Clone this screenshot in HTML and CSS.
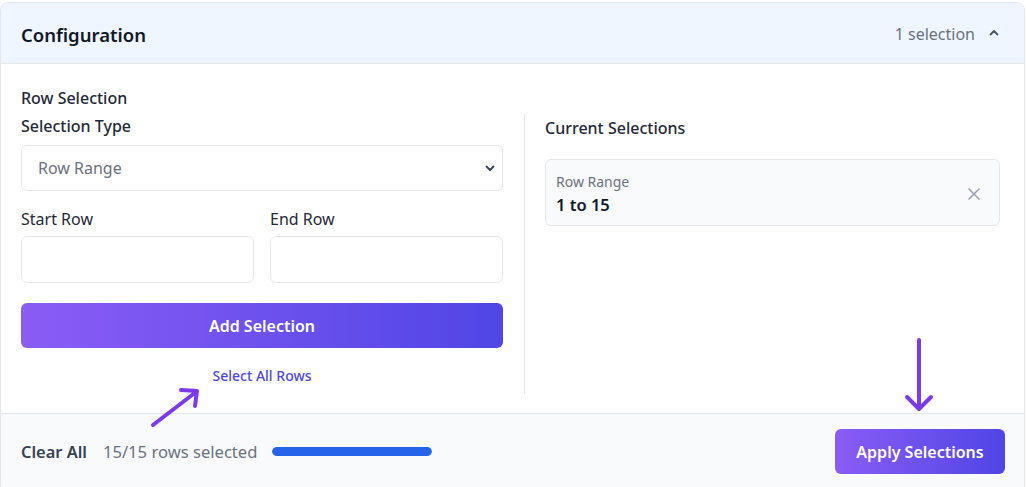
FILE: index.html
```html
<!DOCTYPE html>
<html>
<head>
<meta charset="utf-8">
<link rel="stylesheet" href="styles.css">
</head>
<body>
<div class="card">
  <div class="header">
    <div class="title">Configuration</div>
    <div class="header-right">
      <span class="count">1 selection</span>
      <svg class="chev" width="12" height="12" viewBox="0 0 12 12"><path d="M2.5 7.5 L6 4 L9.5 7.5" fill="none" stroke="#4b5563" stroke-width="1.8" stroke-linecap="round" stroke-linejoin="round"/></svg>
    </div>
  </div>
  <div class="body">
    <div class="section-title">Row Selection</div>
    <div class="grid">
      <div class="left">
        <div class="label strong">Selection Type</div>
        <div class="select">
          <span>Row Range</span>
          <svg width="12" height="12" viewBox="0 0 12 12"><path d="M2.5 4.5 L6 8 L9.5 4.5" fill="none" stroke="#374151" stroke-width="1.8" stroke-linecap="round" stroke-linejoin="round"/></svg>
        </div>
        <div class="row2">
          <div class="field">
            <div class="label">Start Row</div>
            <div class="input"></div>
          </div>
          <div class="field">
            <div class="label">End Row</div>
            <div class="input"></div>
          </div>
        </div>
        <button class="btn add">Add Selection</button>
        <div class="link">Select All Rows</div>
      </div>
      <div class="right">
        <div class="label strong cur">Current Selections</div>
        <div class="item">
          <div class="item-text">
            <div class="item-type">Row Range</div>
            <div class="item-val">1 to 15</div>
          </div>
          <svg width="14" height="14" viewBox="0 0 14 14"><path d="M2 2 L12 12 M12 2 L2 12" stroke="#9ca3af" stroke-width="1.6" stroke-linecap="round"/></svg>
        </div>
      </div>
    </div>
  </div>
  <div class="footer">
    <div class="footer-left">
      <span class="clear">Clear All</span>
      <span class="rows">15/15 rows selected</span>
      <div class="bar"><div class="fill" style="width:100%"></div></div>
    </div>
    <button class="btn apply">Apply Selections</button>
  </div>
</div>
<svg class="arrow arrow-diag" width="60" height="50" viewBox="0 0 60 50"><path d="M5 45 L48 12 M33 10 L49 11 L47 26" fill="none" stroke="#7c3aed" stroke-width="4" stroke-linecap="round" stroke-linejoin="round"/></svg>
<svg class="arrow arrow-down" width="40" height="80" viewBox="0 0 40 80"><path d="M20 4 L20 72 M8 61 L20 73 L32 61" fill="none" stroke="#7c3aed" stroke-width="4" stroke-linecap="round" stroke-linejoin="round"/></svg>
</body>
</html>
```

FILE: styles.css
```css
* { box-sizing: border-box; }
html, body { margin: 0; padding: 0; background: #fff; }
body {
  font-family: "Noto Sans", "Open Sans", sans-serif;
  color: #374151;
  position: relative;
  width: 1026px;
  height: 487px;
  overflow: hidden;
  padding-top: 2px;
}
.card {
  width: 1025px;
  border: 1px solid #e5e7eb;
  border-radius: 8px;
  overflow: hidden;
  background: #fff;
}
.header {
  background: #eff6ff;
  border-bottom: 1px solid #e5e7eb;
  height: 61px;
  display: flex;
  align-items: center;
  justify-content: space-between;
  padding: 2px 24px 0 20px;
}
.title { font-size: 18.5px; font-weight: 600; color: #111827; }
.header-right { display: flex; align-items: center; gap: 13px; }
.count { font-size: 16px; color: #6b7280; }
.chev { margin-top: -2px; }
.body { padding: 22px 24px 19px 20px; }
.section-title { font-size: 16px; font-weight: 500; color: #1f2937; line-height: 24px; height: 24px; margin-bottom: 4px; }
.grid { display: grid; grid-template-columns: 504px 1fr; }
.left { padding-right: 21px; border-right: 1px solid #e5e7eb; }
.right { padding-left: 20px; }
.label { font-size: 16px; line-height: 24px; color: #1f2937; margin-bottom: 7px; }
.label.strong { font-weight: 500; color: #1f2937; }
.label.cur { margin-top: 2px; }
.select {
  height: 46px;
  border: 1px solid #e5e7eb;
  border-radius: 6px;
  display: flex;
  align-items: center;
  justify-content: space-between;
  padding: 0 6px 0 16px;
  font-size: 16px;
  color: #6b7280;
  margin-bottom: 16px;
}
.row2 { display: grid; grid-template-columns: 1fr 1fr; gap: 16px; }
.field .label { margin-bottom: 5px; }
.input { height: 47px; border: 1px solid #e5e7eb; border-radius: 6px; }
.btn {
  border: none;
  font-family: inherit;
  color: #fff;
  font-weight: 600;
  font-size: 16px;
  border-radius: 6px;
  background: linear-gradient(90deg, #8b5cf6, #4f46e5);
  cursor: pointer;
}
.add { width: 100%; height: 45px; margin-top: 20px; display: block; }
.link { text-align: center; color: #4f46e5; font-size: 14px; font-weight: 500; line-height: 20px; margin-top: 18px; padding-bottom: 8px; }
.item {
  margin-top: 19px;
  border: 1px solid #e5e7eb;
  border-radius: 6px;
  background: #f9fafb;
  height: 67px;
  display: flex;
  align-items: center;
  justify-content: space-between;
  padding: 2px 18px 0 10px;
}
.item-type { font-size: 14px; color: #6b7280; line-height: 22px; }
.item-val { font-size: 16.5px; font-weight: 600; color: #111827; line-height: 24px; }
.footer {
  background: #f9fafb;
  border-top: 1px solid #e5e7eb;
  height: 80px;
  display: flex;
  align-items: flex-start;
  justify-content: space-between;
  padding: 15px 19px 0 20px;
}
.footer-left { display: flex; align-items: center; height: 45px; gap: 0; }
.clear { font-size: 16.4px; font-weight: 600; color: #374151; margin-right: 16px; }
.rows { font-size: 16.6px; color: #6b7280; margin-right: 15px; }
.bar { width: 160px; height: 9px; background: #e5e7eb; border-radius: 5px; overflow: hidden; }
.fill { height: 100%; background: #2563eb; border-radius: 5px; }
.apply { width: 170px; height: 45px; }
.arrow { position: absolute; }
.arrow-diag { left: 148px; top: 380px; }
.arrow-down { left: 899px; top: 336px; }
```
